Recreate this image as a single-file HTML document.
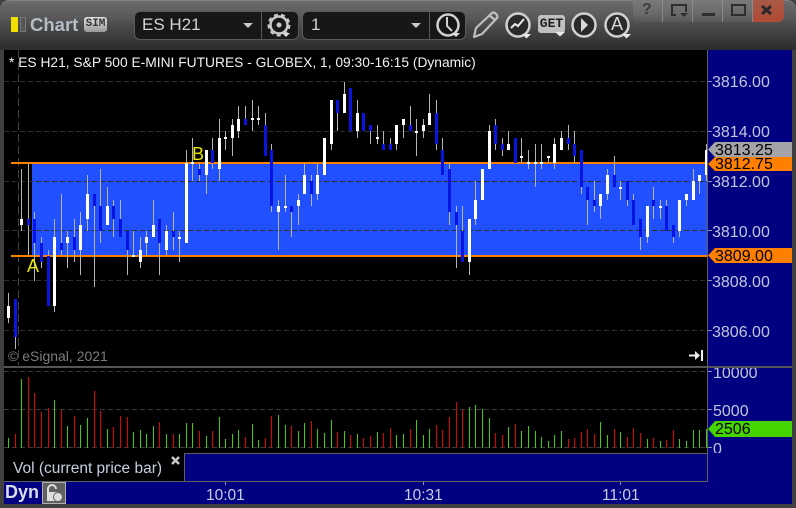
<!DOCTYPE html>
<html><head><meta charset="utf-8">
<style>
html,body{margin:0;padding:0;width:796px;height:508px;overflow:hidden;background:#3a3a3a}
#w{position:relative;width:796px;height:508px;overflow:hidden;background:#404040;font-family:"Liberation Sans",sans-serif}
.a{position:absolute;white-space:nowrap}
#top{left:0;top:0;width:796px;height:50px;border-radius:9px 9px 0 0;background:linear-gradient(#6e6e6e 0,#666 4px,#5a5a5a 16px,#4a4a4a 25px,#3a3a3a 38px,#2a2a2a 50px);box-sizing:border-box;border-top:1px solid #808080}
.ax{font-size:16px;line-height:18px;color:#bcc8dc;left:712px}
.tg{font-size:16px;line-height:16px;color:#000;left:715px}
.t{font-size:15.5px;line-height:18px;color:#c4d0e0;top:487px}
.cb{background:#171717;border:1px solid #5a5a5a;border-radius:6px;box-sizing:border-box}
</style></head><body><div id="w">
<div class="a" id="top"></div>
<div class="a" style="left:11px;top:17px;width:7px;height:15px;background:#f4e000"></div>
<div class="a" style="left:20px;top:17px;width:6px;height:15px;background:#555;border:1px solid #777;box-sizing:border-box"></div>
<div class="a" style="left:30px;top:14px;font-size:18.5px;font-weight:bold;line-height:22px;color:#b4bcc4">Chart</div>
<div class="a" style="left:84px;top:17px;width:23px;height:15px;border-radius:3px;background:linear-gradient(#e0e0e0,#9a9a9a);color:#333;font:bold 11px/15px 'Liberation Mono',monospace;text-align:center">SIM</div>
<div class="a cb" style="left:134px;top:11px;width:165px;height:29px"></div>
<div class="a" style="left:261px;top:11px;width:1px;height:29px;background:#5a5a5a"></div>
<div class="a" style="left:142px;top:15px;font-size:17px;line-height:20px;color:#d0d4d8">ES H21</div>
<div class="a cb" style="left:302px;top:11px;width:164px;height:29px"></div>
<div class="a" style="left:429px;top:11px;width:1px;height:29px;background:#5a5a5a"></div>
<div class="a" style="left:311px;top:15px;font-size:17px;line-height:20px;color:#d0d4d8">1</div>
<svg class="a" style="left:0;top:0" width="796" height="50" viewBox="0 0 796 50">
<path d="M243 23h10l-5 5zM411 23h10l-5 5z" fill="#c8c8c8"/>
<circle cx="279" cy="25" r="8.500" fill="none" stroke="#c8c8c8" stroke-width="2.500"/>
<circle cx="279" cy="25" r="10.500" fill="none" stroke="#c8c8c8" stroke-width="2" stroke-dasharray="4 3.330"/>
<circle cx="279" cy="25" r="2.500" fill="#c8c8c8"/>
<path d="M282 33h8l-4 4z" fill="#d8d8d8"/>
<circle cx="448" cy="25" r="10.500" fill="none" stroke="#d0d0d0" stroke-width="2.500"/>
<path d="M447 17v9l5 5" fill="none" stroke="#d0d0d0" stroke-width="2"/>
<path d="M452 33h8l-4 4z" fill="#e0e0e0"/>
<path d="M474 37l2-9 16-15q2-1 3 0l2 2q1 2 0 3l-15 16zM489 15l6 5" fill="none" stroke="#c0c0c0" stroke-width="2.200" stroke-linejoin="round"/>
<circle cx="518" cy="25" r="11.500" fill="#2a2a2a" stroke="#d0d0d0" stroke-width="2.500"/>
<path d="M511 28l4-4 3 2 6-7" fill="none" stroke="#e8e8e8" stroke-width="2"/>
<path d="M522 34h9l-4.500 4.500z" fill="#e8e8e8"/>
<rect x="538" y="15" width="27" height="18" rx="3" fill="#c0c0c0"/>
<path d="M555 32h10l-5 4.500z" fill="#e8e8e8"/>
<circle cx="584" cy="25" r="11.500" fill="#2a2a2a" stroke="#d0d0d0" stroke-width="2.500"/>
<path d="M581 18l7 7-7 7z" fill="#d8d8d8"/>
<circle cx="617" cy="25" r="11.500" fill="#2a2a2a" stroke="#d0d0d0" stroke-width="2.500"/>
<path d="M622 34h9l-4.500 4.500z" fill="#e8e8e8"/>
</svg>
<div class="a" style="left:538px;top:16px;width:27px;height:15px;font:bold 13px/15px 'Liberation Mono',monospace;color:#222;text-align:center">GET</div>
<div class="a" style="left:611px;top:14px;font-size:18px;line-height:20px;color:#d8d8d8">A</div>
<!-- window buttons -->
<div class="a" style="left:633px;top:0;width:151px;height:22px;border-radius:0 0 6px 6px;background:linear-gradient(#7a7a7a,#6a6a6a 60%,#585858);overflow:hidden">
<div class="a" style="left:119px;top:0;width:32px;height:22px;background:linear-gradient(#a85a48,#b04a34)"></div>
<div class="a" style="left:29px;top:0;width:1px;height:22px;background:#8a8a8a"></div>
<div class="a" style="left:59px;top:0;width:1px;height:22px;background:#8a8a8a"></div>
<div class="a" style="left:89px;top:0;width:1px;height:22px;background:#8a8a8a"></div>
<div class="a" style="left:119px;top:0;width:1px;height:22px;background:#8a8a8a"></div>
<div class="a" style="left:9px;top:1px;font:bold 16px/18px 'Liberation Sans',sans-serif;color:#3c3c3c">?</div>
<svg class="a" style="left:0;top:0" width="151" height="22"><path d="M43 15h-4V5h14v7" fill="none" stroke="#2e2e2e" stroke-width="2"/><path d="M47 13h8l-4 4z" fill="#2e2e2e"/><rect x="69" y="13" width="13" height="3" fill="#2e2e2e"/><rect x="99" y="5" width="13" height="10" fill="none" stroke="#2e2e2e" stroke-width="2"/><path d="M129 6l9 8M138 6l-9 8" stroke="#2a2a2a" stroke-width="3"/></svg>
</div>
<!-- main plot -->
<div class="a" style="left:4px;top:50px;width:704px;height:431px;background:#000"></div>
<div class="a" style="left:708px;top:50px;width:84px;height:454px;background:#000080"></div>
<div class="a" style="left:4px;top:482px;width:788px;height:22px;background:#000080"></div>
<div class="a" style="left:185px;top:454px;width:523px;height:27px;background:#000080"></div>
<svg class="a" style="left:0;top:0" width="796" height="508" viewBox="0 0 796 508" shape-rendering="crispEdges">
<rect x="32" y="164" width="675" height="92" fill="#2050ff"/>
<path d="M18.500 50V365" stroke="#444" stroke-dasharray="8 4" fill="none"/>
<path d="M4 81.500H707M4 131.500H707M4 181.500H707M4 230.500H707M4 280.500H707M4 330.500H707" stroke="#2e2e2e" stroke-dasharray="5 3" fill="none"/>
<path d="M4 371.500H707M4 409.500H707M4 447.500H707" stroke="#3a3a3a" stroke-dasharray="5 3" fill="none"/>
<rect x="11" y="162" width="696" height="2" fill="#ff8000"/>
<rect x="11" y="255" width="696" height="2" fill="#ff8000"/>
<g transform="translate(.5,0)" fill="none" stroke="#b4b4b4">
<path d="M8 293V323M15 337V349M21 169V231M28 163V255M34 212V281M41 237V268M48 250V256M54 219V312M61 194V255M67 231V268M74 219V262M80 212V275M87 175V231M94 194V287M100 169V243M107 187V225M113 200V237M120 200V237M127 250V275M133 231V255M140 237V268M146 231V256M153 200V237M159 243V275M166 225V255M173 212V250M179 231V262M186 150V163M192 138V181M199 163V181M206 175V194M212 138V169M219 119V181M225 131V150M232 119V156M238 106V138M245 106V119M252 100V131M258 106V125M265 113V125M271 144V212M278 200V250M285 175V212M291 212V237M298 194V225M304 163V175M311 175V206M317 163V200M331 144V150M337 113V131M344 82V94M357 100V138M370 131V144M377 125V144M383 131V144M390 138V144M396 144V150M403 125V138M410 106V125M416 119V156M423 119V138M429 94V113M436 100V150M442 138V150M449 163V225M456 206V268M462 206V231M469 262V275M475 181V225M489 125V131M495 119V150M502 138V156M508 131V144M521 138V163M528 150V169M535 144V187M541 144V169M548 158V163M554 138V169M561 131V138M568 125V150M574 131V163M581 187V194M587 200V225M594 181V212M600 206V219M607 169V200M614 156V175M620 181V200M627 200V206M633 194V200M640 237V250M647 237V243M653 187V219M660 200V219M666 200V206M673 237V243M679 231V237M686 200V206M693 169V181M699 181V194M706 144V181"/>
</g>
<g fill="#fff"><path d="M7 306h3v12h-3zM20 219h3v6h-3zM53 237h3v69h-3zM66 237h3v6h-3zM79 225h3v25h-3zM86 194h3v25h-3zM106 206h3v19h-3zM132 255h3v2h-3zM139 250h3v12h-3zM145 237h3v6h-3zM152 225h3v12h-3zM165 231h3v19h-3zM178 237h3v2h-3zM185 163h3v80h-3zM191 162h3v2h-3zM205 150h3v25h-3zM218 138h3v31h-3zM224 137h3v2h-3zM231 125h3v13h-3zM237 119h3v12h-3zM251 118h3v2h-3zM257 118h3v2h-3zM277 206h3v6h-3zM284 206h3v2h-3zM297 200h3v6h-3zM303 175h3v19h-3zM316 175h3v19h-3zM323 138h3v37h-3zM330 100h3v44h-3zM343 94h3v19h-3zM356 113h3v18h-3zM376 137h3v2h-3zM395 125h3v19h-3zM402 119h3v6h-3zM415 131h3v2h-3zM422 125h3v6h-3zM428 113h3v12h-3zM468 219h3v43h-3zM474 200h3v19h-3zM481 169h3v31h-3zM488 131h3v38h-3zM507 144h3v6h-3zM520 156h3v2h-3zM527 162h3v2h-3zM534 162h3v2h-3zM540 162h3v2h-3zM547 156h3v2h-3zM553 144h3v19h-3zM560 138h3v12h-3zM599 194h3v12h-3zM606 175h3v19h-3zM619 187h3v2h-3zM646 206h3v31h-3zM659 206h3v2h-3zM678 200h3v31h-3zM685 194h3v6h-3zM692 181h3v19h-3zM698 175h3v6h-3zM705 150h3v25h-3z"/></g>
<g fill="#0a14e0"><path d="M14 299h3v38h-3zM27 219h3v6h-3zM33 219h3v24h-3zM40 243h3v19h-3zM47 256h3v50h-3zM60 243h3v7h-3zM73 237h3v13h-3zM93 194h3v12h-3zM99 206h3v25h-3zM112 206h3v13h-3zM119 219h3v18h-3zM126 231h3v19h-3zM158 219h3v24h-3zM172 231h3v6h-3zM198 169h3v6h-3zM211 150h3v13h-3zM244 119h3v6h-3zM264 125h3v31h-3zM270 150h3v56h-3zM290 206h3v6h-3zM310 181h3v13h-3zM336 100h3v13h-3zM349 88h3v43h-3zM362 113h3v18h-3zM369 125h3v6h-3zM382 144h3v6h-3zM389 144h3v6h-3zM409 125h3v6h-3zM435 113h3v31h-3zM441 150h3v25h-3zM448 169h3v43h-3zM455 212h3v13h-3zM461 231h3v31h-3zM494 125h3v19h-3zM501 144h3v6h-3zM514 138h3v25h-3zM567 138h3v6h-3zM573 144h3v12h-3zM580 150h3v37h-3zM586 187h3v13h-3zM593 200h3v6h-3zM613 175h3v12h-3zM626 181h3v19h-3zM632 200h3v25h-3zM639 219h3v18h-3zM652 200h3v6h-3zM665 206h3v25h-3zM672 225h3v12h-3z"/></g>
<g transform="translate(.5,0)" fill="none">
<path stroke="#3cd000" d="M8 438V448M21 379V448M54 400V448M67 426V448M80 425V448M87 418V448M107 429V448M133 432V448M140 430V448M146 434V448M153 426V448M166 434V448M179 434V448M186 423V448M192 423V448M206 436V448M219 417V448M225 439V448M232 434V448M238 430V448M252 424V448M258 440V448M278 415V448M285 425V448M298 431V448M304 423V448M317 429V448M324 433V448M331 420V448M344 431V448M357 434V448M377 432V448M396 435V448M403 434V448M416 420V448M423 435V448M429 429V448M469 407V448M475 405V448M482 409V448M489 418V448M508 427V448M521 431V448M528 426V448M535 431V448M541 437V448M548 441V448M554 435V448M561 431V448M600 422V448M607 435V448M620 432V448M647 439V448M660 441V448M679 439V448M686 441V448M693 430V448M699 430V448M706 429V448"/>
<path stroke="#e00000" d="M15 434V448M28 377V448M34 393V448M41 412V448M48 408V448M61 410V448M74 416V448M94 391V448M100 411V448M113 427V448M120 416V448M127 417V448M159 422V448M173 434V448M199 431V448M212 431V448M245 437V448M265 438V448M271 416V448M291 426V448M311 421V448M337 432V448M350 435V448M363 438V448M370 436V448M383 433V448M390 428V448M410 429V448M436 425V448M442 430V448M449 417V448M456 402V448M462 410V448M495 433V448M502 435V448M515 424V448M568 439V448M574 438V448M581 432V448M587 429V448M594 434V448M614 429V448M627 437V448M633 428V448M640 433V448M653 438V448M666 440V448M673 430V448"/>
</g>
<!-- frame lines -->
<rect x="4" y="366" width="788" height="2" fill="#555"/>
<rect x="707" y="50" width="1" height="432" fill="#606060"/>
<rect x="184" y="453" width="524" height="1" fill="#606060"/>
<rect x="184" y="454" width="1" height="28" fill="#606060"/>
<rect x="4" y="481" width="704" height="1" fill="#606060"/>
<path d="M708 81.500h4M708 131.500h4M708 181.500h4M708 230.500h4M708 280.500h4M708 330.500h4M708 371.500h4M708 409.500h4M708 447.500h4" stroke="#8a96b0" fill="none"/>
<path d="M225.500 482v3M423.500 482v3M620.500 482v3" stroke="#8a96b0" fill="none"/>
</svg>
<div class="a" style="left:9px;top:55px;font-size:13.800px;line-height:16px;color:#f2f2f2">* ES H21, S&amp;P 500 E-MINI FUTURES - GLOBEX, 1, 09:30-16:15 (Dynamic)</div>
<div class="a" style="left:8px;top:348px;font-size:14px;line-height:16px;color:#7c7c7c">© eSignal, 2021</div>
<div class="a" style="left:192px;top:144px;font-size:18px;line-height:20px;color:#e6e600">B</div>
<div class="a" style="left:27px;top:256px;font-size:18px;line-height:20px;color:#e6e600">A</div>
<svg class="a" style="left:688px;top:349px" width="17" height="13"><path d="M1 6.500h8" stroke="#eee" stroke-width="2"/><path d="M7 2l5 4.500-5 4.500z" fill="#eee"/><rect x="13" y="1" width="2" height="11" fill="#eee"/></svg>
<div class="a ax" style="top:74px">3816.00</div>
<div class="a ax" style="top:124px">3814.00</div>
<div class="a ax" style="top:174px">3812.00</div>
<div class="a ax" style="top:224px">3810.00</div>
<div class="a ax" style="top:274px">3808.00</div>
<div class="a ax" style="top:324px">3806.00</div>
<svg class="a" style="left:708px;top:142px" width="84" height="122"><path d="M0 7.500L7 0H84V15H7z" fill="#a4a4a8"/><path d="M0 22L7 15H84V29H7z" fill="#ff8000"/><path d="M0 113.500L7 106H84V121H7z" fill="#ff8000"/></svg>
<div class="a tg" style="top:143px">3813.25</div>
<div class="a tg" style="top:157px">3812.75</div>
<div class="a tg" style="top:249px">3809.00</div>
<div class="a" style="left:708px;top:368px;width:84px;height:85px;overflow:hidden">
<div class="a ax" style="left:5px;top:-3px">10000</div>
<div class="a ax" style="left:5px;top:35px">5000</div>
<div class="a ax" style="left:5px;top:73px">0</div>
</div>
<svg class="a" style="left:708px;top:421px" width="84" height="16"><path d="M0 8L7 0H84V16H7z" fill="#44d400"/></svg>
<div class="a tg" style="top:422px">2506</div>
<div class="a" style="left:13px;top:460px;font-size:15.500px;line-height:18px;color:#c4d0e0">Vol (current price bar)</div>
<svg class="a" style="left:171px;top:456px" width="10" height="10"><path d="M1 1l7 7M8 1l-7 7" stroke="#c8c8c8" stroke-width="2.500"/></svg>
<div class="a" style="left:5px;top:482px;font-size:18px;font-weight:bold;line-height:20px;color:#d8dce4">Dyn</div>
<div class="a" style="left:42px;top:482px;width:24px;height:22px;box-sizing:border-box;border:1px solid #b0b0b0;background:#606060"></div>
<svg class="a" style="left:42px;top:482px" width="24" height="22"><path d="M6 10V7a4 4 0 0 1 8 0" fill="none" stroke="#ddd" stroke-width="2"/><rect x="5" y="10" width="10" height="9" fill="#ddd"/><circle cx="16" cy="15" r="4.500" fill="#ddd" stroke="#606060"/></svg>
<div class="a t" style="left:206px">10:01</div>
<div class="a t" style="left:404px">10:31</div>
<div class="a t" style="left:602px">11:01</div>
</div></body></html>
